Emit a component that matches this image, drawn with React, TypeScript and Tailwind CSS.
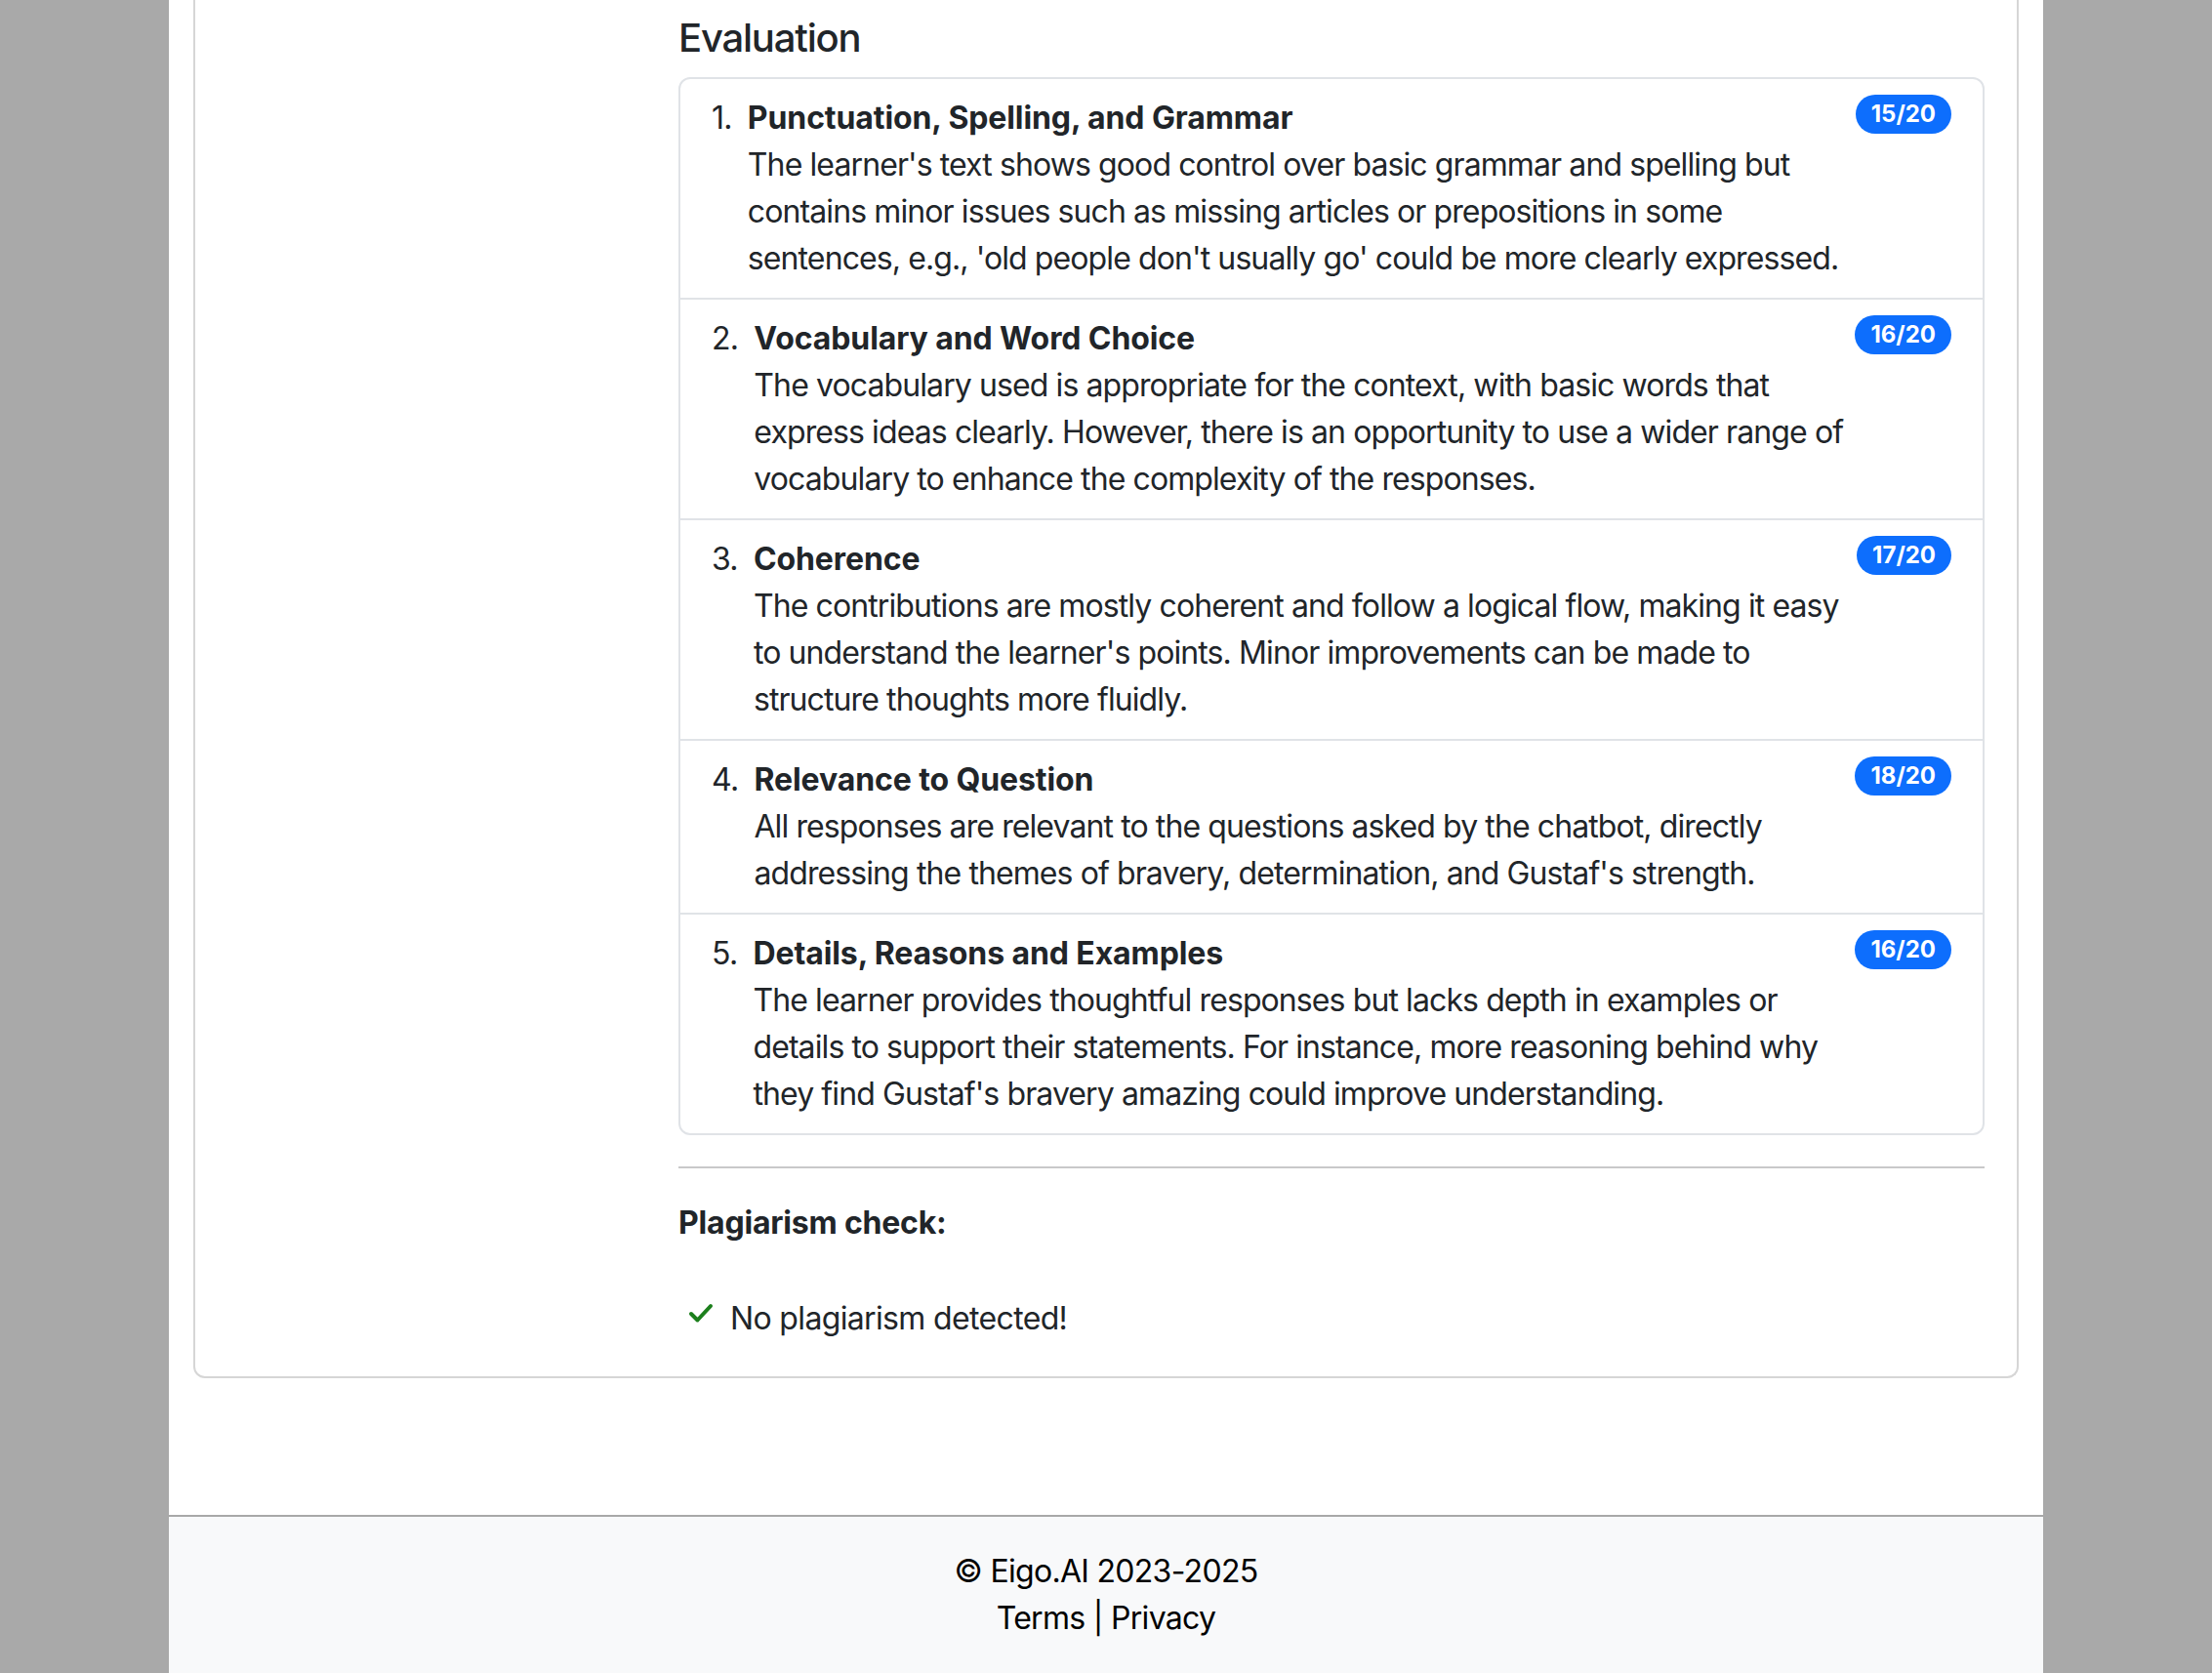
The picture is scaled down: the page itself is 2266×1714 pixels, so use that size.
import React from "react";

type Item = { title: string; score: string; text: string };

const items: Item[] = [
  {
    title: "Punctuation, Spelling, and Grammar",
    score: "15/20",
    text: "The learner's text shows good control over basic grammar and spelling but contains minor issues such as missing articles or prepositions in some sentences, e.g., 'old people don't usually go' could be more clearly expressed.",
  },
  {
    title: "Vocabulary and Word Choice",
    score: "16/20",
    text: "The vocabulary used is appropriate for the context, with basic words that express ideas clearly. However, there is an opportunity to use a wider range of vocabulary to enhance the complexity of the responses.",
  },
  {
    title: "Coherence",
    score: "17/20",
    text: "The contributions are mostly coherent and follow a logical flow, making it easy to understand the learner's points. Minor improvements can be made to structure thoughts more fluidly.",
  },
  {
    title: "Relevance to Question",
    score: "18/20",
    text: "All responses are relevant to the questions asked by the chatbot, directly addressing the themes of bravery, determination, and Gustaf's strength.",
  },
  {
    title: "Details, Reasons and Examples",
    score: "16/20",
    text: "The learner provides thoughtful responses but lacks depth in examples or details to support their statements. For instance, more reasoning behind why they find Gustaf's bravery amazing could improve understanding.",
  },
];

export default function App() {
  return (
    <div
      className="min-h-screen bg-[#a9a9a9] text-[#212529]"
      style={{ fontFamily: "Inter, 'Noto Sans', 'Liberation Sans', sans-serif" }}
    >
      <div className="mx-auto flex w-[1920px] flex-col bg-white">
        <main className="px-[25px]">
          <div className="rounded-b-[12px] border-2 border-t-0 border-[#d6d6d6] pb-[35px] pl-[495px] pr-[33px]">
            <h5 className="pt-[15px] text-[40px] font-medium leading-[48px] tracking-[-1.2px]">Evaluation</h5>
            <ol className="mt-[16px] rounded-[12px] border-2 border-[#e0e3e7]">
              {items.map((it, i) => (
                <li
                  key={it.title}
                  className={
                    "flex items-start justify-between px-[32px] py-[16px] " +
                    (i > 0 ? "border-t-2 border-[#e0e3e7]" : "")
                  }
                >
                  <span className="text-[32px] leading-[48px] tracking-[-0.7px]">{i + 1}.</span>
                  <div className="ml-[16px] mr-auto text-[32px] leading-[48px] tracking-[-0.9px]">
                    <div className="font-bold tracking-[-0.1px]">{it.title}</div>
                    {it.text}
                  </div>
                  <span className="shrink-0 rounded-full bg-[#0d6efd] px-[16px] py-[8px] text-[24px] font-bold leading-[24px] text-white">
                    {it.score}
                  </span>
                </li>
              ))}
            </ol>
            <hr className="mt-[32px] border-t-2 border-[#c9c9ca]" />
            <div className="mt-[32px] text-[32px] font-bold leading-[48px] tracking-[-0.2px]">Plagiarism check:</div>
            <div className="mt-[50px] flex items-center text-[32px] leading-[48px] tracking-[-0.65px]">
              <svg
                width="26"
                height="22"
                viewBox="0 0 26 22"
                className="ml-[10px] mr-[17px] -mt-[10px]"
                fill="none"
                stroke="#1c7f1c"
                strokeWidth="4"
                strokeLinecap="round"
                strokeLinejoin="round"
              >
                <path d="M3 11 L9.5 17.5 L23 3" />
              </svg>
              <span>No plagiarism detected!</span>
            </div>
          </div>
        </main>
        <div className="h-[140px]" />
        <footer className="border-t-2 border-[#a8a8a8] bg-[#f8f9fa] pb-[32px] pt-[32px] text-center text-[32px] leading-[48px] tracking-[-0.7px] text-black">
          <div>© Eigo.AI 2023-2025</div>
          <div>
            <a className="text-black no-underline">Terms</a> | <a className="text-black no-underline">Privacy</a>
          </div>
        </footer>
      </div>
    </div>
  );
}
